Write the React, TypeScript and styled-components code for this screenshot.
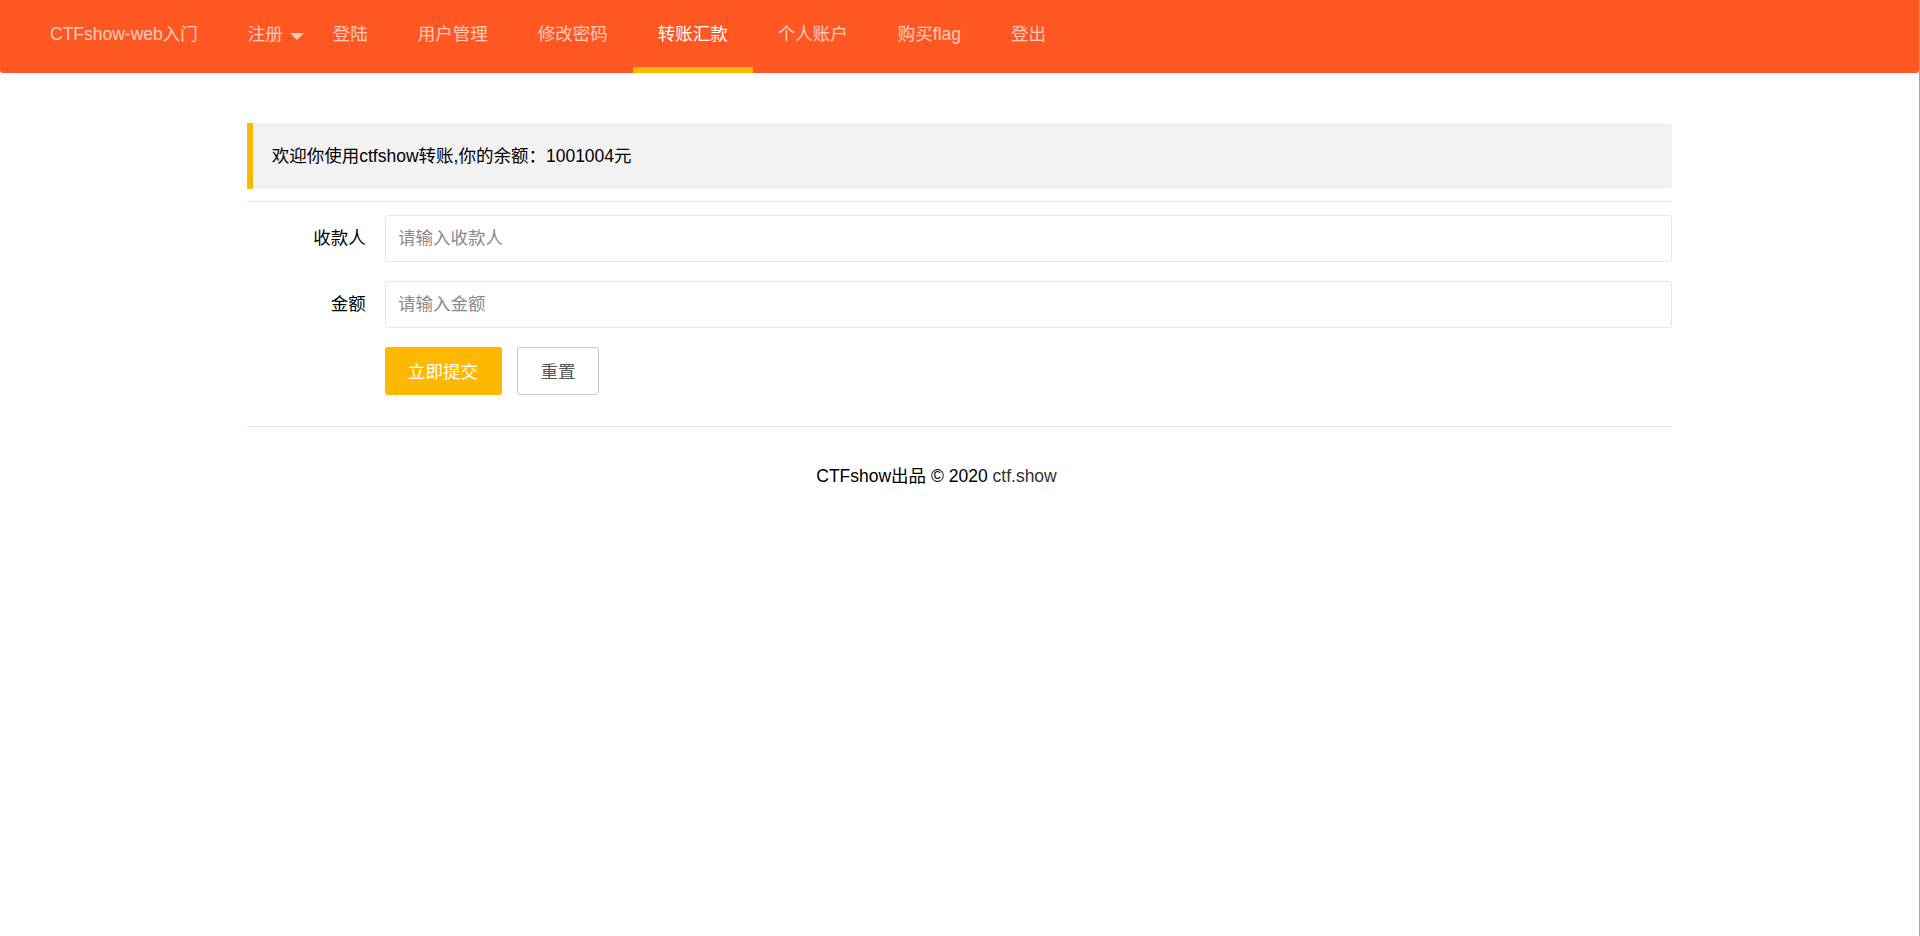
import styled, { createGlobalStyle } from "styled-components";

// page reset and base font
const GlobalStyle = createGlobalStyle`
    html, body {
        margin: 0;
        padding: 0;
        background: #fff;
    }
    body {
        font-family: "Liberation Sans", Arial, "Noto Sans CJK SC", sans-serif;
        font-size: 17.5px;
        color: #000;
    }
`;

// wrapper with the thin grey edge on the right
const Page = styled.div`
    min-height: 936px;
    border-right: 1px solid #a8a8a8;
    box-sizing: border-box;
`;

// orange top navigation
const NavBar = styled.ul`
    display: flex;
    margin: 0;
    padding: 0 25px;
    height: 73px;
    list-style: none;
    background-color: #FF5722;
    border-radius: 0 0 3px 3px;
`;

const NavItem = styled.li<{ $active?: boolean }>`
    position: relative;
    line-height: 69px;
    padding: 0 25px;
    color: ${(p) => (p.$active ? "#fff" : "rgba(255,255,255,.7)")};
    white-space: nowrap;
    cursor: pointer;

    &::after {
        content: "";
        display: ${(p) => (p.$active ? "block" : "none")};
        position: absolute;
        left: 0;
        right: 0;
        bottom: 0;
        height: 6px;
        background-color: #FFB800;
    }
`;

// dropdown caret next to 注册
const Caret = styled.span`
    position: absolute;
    right: 4px;
    top: 50%;
    margin-top: -4px;
    width: 0;
    height: 0;
    border-style: solid;
    border-width: 7.5px 7.5px 0 7.5px;
    border-color: rgba(255,255,255,.7) transparent transparent transparent;
`;

// centred content column
const Container = styled.div`
    width: 1425px;
    margin: 50px auto 0;
`;

const Quote = styled.div`
    padding: 18.75px;
    line-height: 28px;
    background-color: #F2F2F2;
    border-left: 6px solid #FFB800;
    border-radius: 0 3px 3px 0;
`;

const Rule = styled.hr`
    height: 1px;
    margin: 12.5px 0;
    border: 0;
    background-color: #e6e6e6;
`;

const Form = styled.form`
    display: flow-root;
`;

const FormRow = styled.div`
    display: flex;
    margin-bottom: 18.75px;
`;

const Label = styled.label`
    width: 137.5px;
    padding-right: 18.75px;
    box-sizing: border-box;
    text-align: right;
    line-height: 47.5px;
    flex-shrink: 0;
`;

const Input = styled.input`
    flex: 1;
    height: 47.5px;
    padding: 0 12.5px;
    box-sizing: border-box;
    border: 1px solid #e6e6e6;
    border-radius: 3px;
    font-family: inherit;
    font-size: 17.5px;
    color: #333;
    outline: none;

    &::placeholder {
        color: #8a8a8a;
    }
`;

const Buttons = styled.div`
    display: flex;
    gap: 15.5px;
    margin-left: 137.5px;
`;

const Button = styled.button<{ $primary?: boolean }>`
    height: 47.5px;
    padding: 0 22.5px;
    box-sizing: border-box;
    font-family: inherit;
    font-size: 17.5px;
    border-radius: 3px;
    cursor: pointer;
    color: ${(p) => (p.$primary ? "#fff" : "#555")};
    background-color: ${(p) => (p.$primary ? "#FFB800" : "#fff")};
    border: 1px solid ${(p) => (p.$primary ? "transparent" : "#C9C9C9")};
`;

const Footer = styled.p`
    margin: 38px 0 0;
    padding-right: 46px;
    text-align: center;
    line-height: 22px;
`;

const FooterLink = styled.a`
    color: #333;
    text-decoration: none;
`;

const navItems = ["登陆", "用户管理", "修改密码", "转账汇款", "个人账户", "购买flag", "登出"];

export default function App() {
    return (
        <Page>
            <GlobalStyle />
            <NavBar>
                <NavItem>CTFshow-web入门</NavItem>
                <NavItem>
                    注册
                    <Caret />
                </NavItem>
                {navItems.map((name) => (
                    <NavItem key={name} $active={name === "转账汇款"}>
                        {name}
                    </NavItem>
                ))}
            </NavBar>
            <Container>
                <Quote>欢迎你使用ctfshow转账,你的余额：1001004元</Quote>
                <Rule />
                <Form>
                    <FormRow>
                        <Label>收款人</Label>
                        <Input placeholder="请输入收款人" />
                    </FormRow>
                    <FormRow>
                        <Label>金额</Label>
                        <Input placeholder="请输入金额" />
                    </FormRow>
                    <FormRow>
                        <Buttons>
                            <Button type="button" $primary>立即提交</Button>
                            <Button type="reset">重置</Button>
                        </Buttons>
                    </FormRow>
                </Form>
                <Rule />
                <Footer>
                    CTFshow出品 © 2020 <FooterLink href="#">ctf.show</FooterLink>
                </Footer>
            </Container>
        </Page>
    );
}
